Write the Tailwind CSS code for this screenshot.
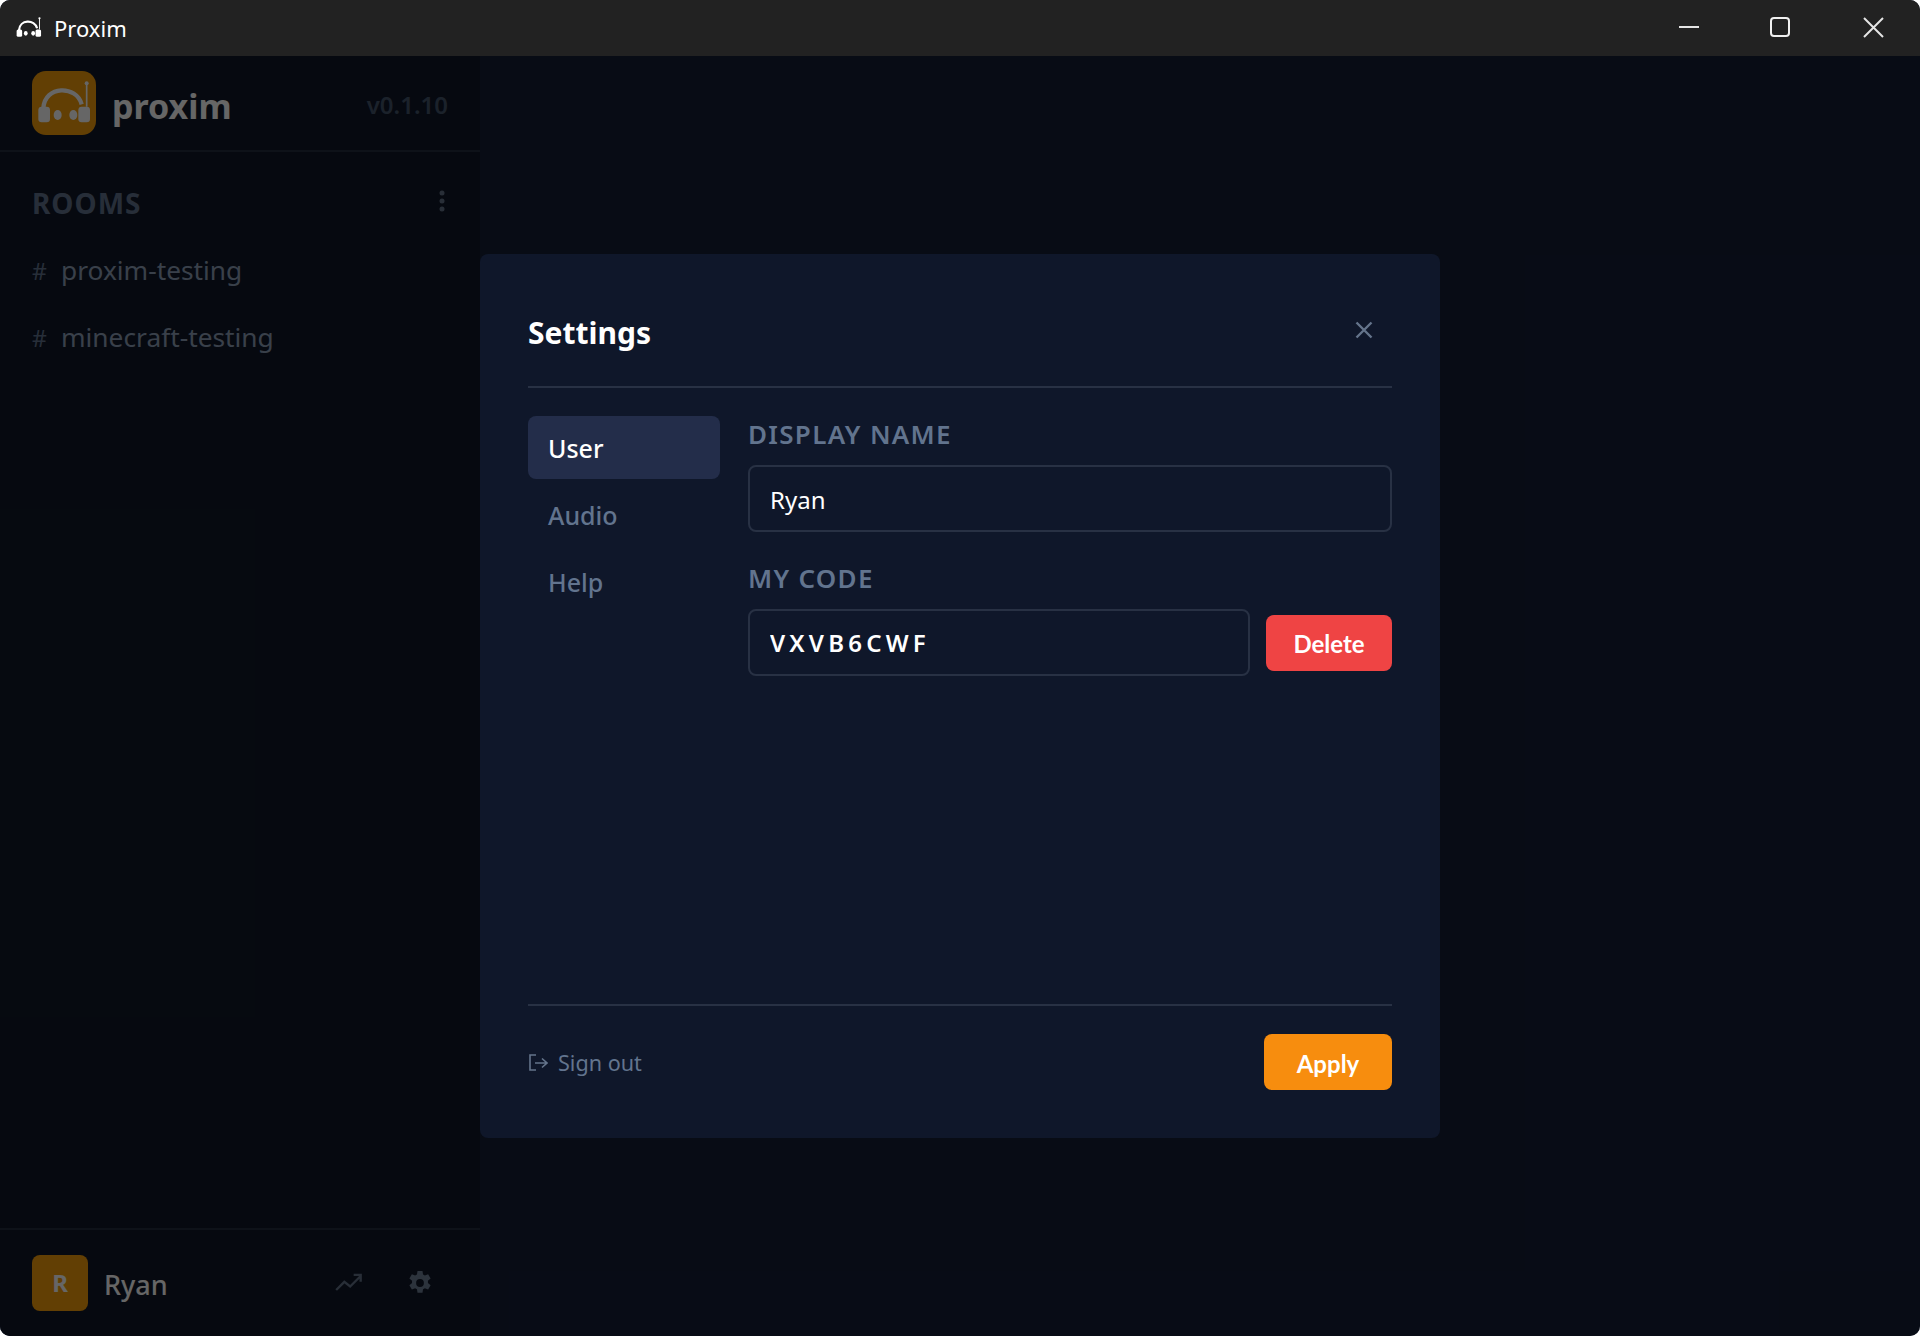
<!DOCTYPE html>
<html lang="en">
<head>
<meta charset="utf-8">
<title>Proxim</title>
<script src="https://cdn.jsdelivr.net/npm/@tailwindcss/browser@4"></script>
</head>
<body class="bg-white font-['Noto_Sans',sans-serif]">
<!-- Window -->
<div class="relative w-[1920px] h-[1336px] flex flex-col rounded-[10px] overflow-hidden bg-[#141e36]">
    <!-- Title bar -->
    <div class="h-[56px] shrink-0 bg-[#222222] flex items-center text-white">
        <svg class="ml-[16px] w-[26px] h-[21px] mt-[-2px]" viewBox="15 30 165 130" fill="#fff">
            <path d="M34 112 C38 42 134 42 149 100" fill="none" stroke="#fff" stroke-width="14"/>
            <path d="M164 37 V107" fill="none" stroke="#fff" stroke-width="6"/>
            <circle cx="164" cy="37" r="7"/>
            <rect x="19" y="107" width="35" height="47" rx="10"/>
            <rect x="139" y="107" width="35" height="47" rx="10"/>
            <ellipse cx="77" cy="132" rx="12" ry="15"/>
            <ellipse cx="124" cy="132" rx="12" ry="15"/>
        </svg>
        <span class="ml-[12px] text-[22px]">Proxim</span>
        <div class="ml-auto flex items-center">
            <svg class="w-[92px] h-[56px]" viewBox="0 0 92 56" stroke="#e5e5e5" stroke-width="2" fill="none"><path d="M35 27 H55"/></svg>
            <svg class="w-[92px] h-[56px]" viewBox="0 0 92 56" stroke="#f0f0f0" stroke-width="2" fill="none"><rect x="35" y="18" width="18" height="18" rx="3"/></svg>
            <svg class="w-[92px] h-[56px]" viewBox="0 0 92 56" stroke="#e5e5e5" stroke-width="2" fill="none"><path d="M36 18 L55 37 M55 18 L36 37"/></svg>
        </div>
    </div>

    <div class="flex-1 flex min-h-0">
        <!-- Sidebar -->
        <div class="w-[480px] shrink-0 bg-[#101829] flex flex-col">
            <div class="h-[96px] shrink-0 border-b-2 border-[#242e40] pl-[32px] pr-[32px] flex items-center">
                <div class="w-[64px] h-[64px] rounded-[14px] bg-[#f59e0b]">
                    <svg class="w-[64px] h-[64px]" viewBox="0 0 192 192" fill="#fff">
                        <path d="M34 112 C38 42 134 42 149 100" fill="none" stroke="#fff" stroke-width="13"/>
                        <path d="M164 37 V107" fill="none" stroke="#fff" stroke-width="5"/>
                        <circle cx="164" cy="37" r="6"/>
                        <rect x="19" y="107" width="35" height="47" rx="10"/>
                        <rect x="139" y="107" width="35" height="47" rx="10"/>
                        <ellipse cx="77" cy="132" rx="12" ry="15"/>
                        <ellipse cx="124" cy="132" rx="12" ry="15"/>
                    </svg>
                </div>
                <span class="ml-[16px] mt-[6px] text-[34px] font-bold text-white">proxim</span>
                <span class="ml-auto mt-[3px] text-[24px] font-semibold text-slate-600">v0.1.10</span>
            </div>
            <div class="pl-[32px] pr-[32px] pt-[33px]">
                <div class="flex items-center justify-between h-[36px]">
                    <span class="text-[28px] font-bold tracking-[1px] text-slate-500">ROOMS</span>
                    <svg class="w-[10px] h-[24px] mr-[1px] mt-[-4px]" viewBox="0 0 10 24" fill="#64748b"><circle cx="5" cy="4" r="2.5"/><circle cx="5" cy="12" r="2.5"/><circle cx="5" cy="20" r="2.5"/></svg>
                </div>
                <div class="mt-[31px] flex flex-col gap-[29px] text-slate-400">
                    <div class="flex items-center h-[38px]"><span class="w-[29px] text-[23px] text-slate-500">#</span><span class="text-[26.3px]">proxim-testing</span></div>
                    <div class="flex items-center h-[38px]"><span class="w-[29px] text-[23px] text-slate-500">#</span><span class="text-[26.3px]">minecraft-testing</span></div>
                </div>
            </div>
            <div class="mt-auto h-[108px] shrink-0 border-t-2 border-[#242e40] pl-[32px] pr-[47px] flex items-center">
                <div class="w-[56px] h-[56px] rounded-[8px] bg-[#f59e0b] flex items-center justify-center text-[24px] font-bold text-white">R</div>
                <span class="ml-[16px] mt-[4px] text-[27px] font-medium text-white">Ryan</span>
                <svg class="ml-auto w-[28px] h-[28px]" viewBox="0 0 24 24" fill="none" stroke="#64748b" stroke-width="2"><path d="M1 18 L8 11 L13 15 L22 6 M16 5 H22 V11"/></svg>
                <svg class="ml-[44px] w-[26px] h-[26px]" viewBox="0 0 24 24" fill="#6f7f96" fill-rule="evenodd"><path d="M9.7 1h4.6l.5 3.1c.6.2 1.2.5 1.7.9l3-1.1 2.3 4-2.5 2c.1.7.1 1.4 0 2.1l2.5 2-2.3 4-3-1.1c-.5.4-1.1.7-1.7.9l-.5 3.2H9.7l-.5-3.2c-.6-.2-1.2-.5-1.7-.9l-3 1.1-2.3-4 2.5-2c-.1-.7-.1-1.4 0-2.1l-2.5-2 2.3-4 3 1.1c.5-.4 1.1-.7 1.7-.9L9.7 1zM12 8.4a3.6 3.6 0 1 0 0 7.2 3.6 3.6 0 0 0 0-7.2z"/></svg>
            </div>
        </div>
        <div class="flex-1"></div>
    </div>

    <!-- Modal overlay -->
    <div class="absolute left-0 right-0 bottom-0 top-[56px] bg-black/60 flex items-center justify-center">
        <div class="w-[960px] h-[884px] bg-[#0f172a] rounded-[8px] px-[48px] flex flex-col">
            <div class="h-[134px] shrink-0 border-b-2 border-[#283144] flex items-center justify-between">
                <span class="text-[30px] font-bold text-white mt-[24px]">Settings</span>
                <svg class="w-[18px] h-[18px] mr-[19px] mt-[20px]" viewBox="0 0 18 18" stroke="#64748b" stroke-width="2.4" fill="none"><path d="M1.5 1.5 L16.5 16.5 M16.5 1.5 L1.5 16.5"/></svg>
            </div>

            <div class="flex-1 flex pt-[28px]">
                <!-- Settings nav -->
                <div class="w-[192px] shrink-0 flex flex-col gap-[4px] text-[25px] font-medium">
                    <div class="h-[63px] rounded-[8px] bg-[#232d4a] text-white pl-[20px] pt-[2px] flex items-center">User</div>
                    <div class="h-[63px] text-slate-500 pl-[20px] pt-[2px] flex items-center">Audio</div>
                    <div class="h-[63px] text-slate-500 pl-[20px] pt-[2px] flex items-center">Help</div>
                </div>
                <!-- User form -->
                <div class="flex-1 ml-[28px]">
                    <div class="h-[36px] flex items-center text-[26px] font-semibold tracking-[1.3px] text-slate-500">DISPLAY NAME</div>
                    <input class="mt-[13px] w-full h-[67px] px-[20px] pt-[2px] rounded-[8px] border-2 border-[#283144] bg-[#0f172a] text-[24px] text-white outline-none" value="Ryan">
                    <div class="mt-[28px] h-[36px] flex items-center text-[26px] font-semibold tracking-[1.3px] text-slate-500">MY CODE</div>
                    <div class="mt-[13px] flex items-center">
                        <input class="w-[502px] h-[67px] px-[20px] rounded-[8px] border-2 border-[#283144] bg-[#0f172a] text-[24px] font-semibold tracking-[4.2px] text-white outline-none" value="VXVB6CWF">
                        <button class="ml-auto mt-[1px] pt-[2px] w-[126px] h-[56px] rounded-[8px] bg-[#ef4444] text-white text-[24px] font-['Lato',sans-serif] font-bold">Delete</button>
                    </div>
                </div>
            </div>

            <div class="h-[134px] shrink-0 border-t-2 border-[#283144] pb-[20px] flex items-center justify-between">
                <div class="flex items-center mt-[3px] text-slate-500 text-[21.6px]">
                    <svg class="w-[20px] h-[20px] mr-[10px] mt-[-1px]" viewBox="0 0 20 20" fill="none" stroke="#64748b" stroke-width="1.6"><path d="M8 2 H2 V17 H8 M7 10 H19 M14 5.5 L19 10 L14 14.5"/></svg>
                    Sign out
                </div>
                <button class="w-[128px] h-[56px] pt-[3px] rounded-[8px] bg-[#f78d0e] text-white text-[24px] font-['Lato',sans-serif] font-bold">Apply</button>
            </div>
        </div>
    </div>
</div>
</body>
</html>
